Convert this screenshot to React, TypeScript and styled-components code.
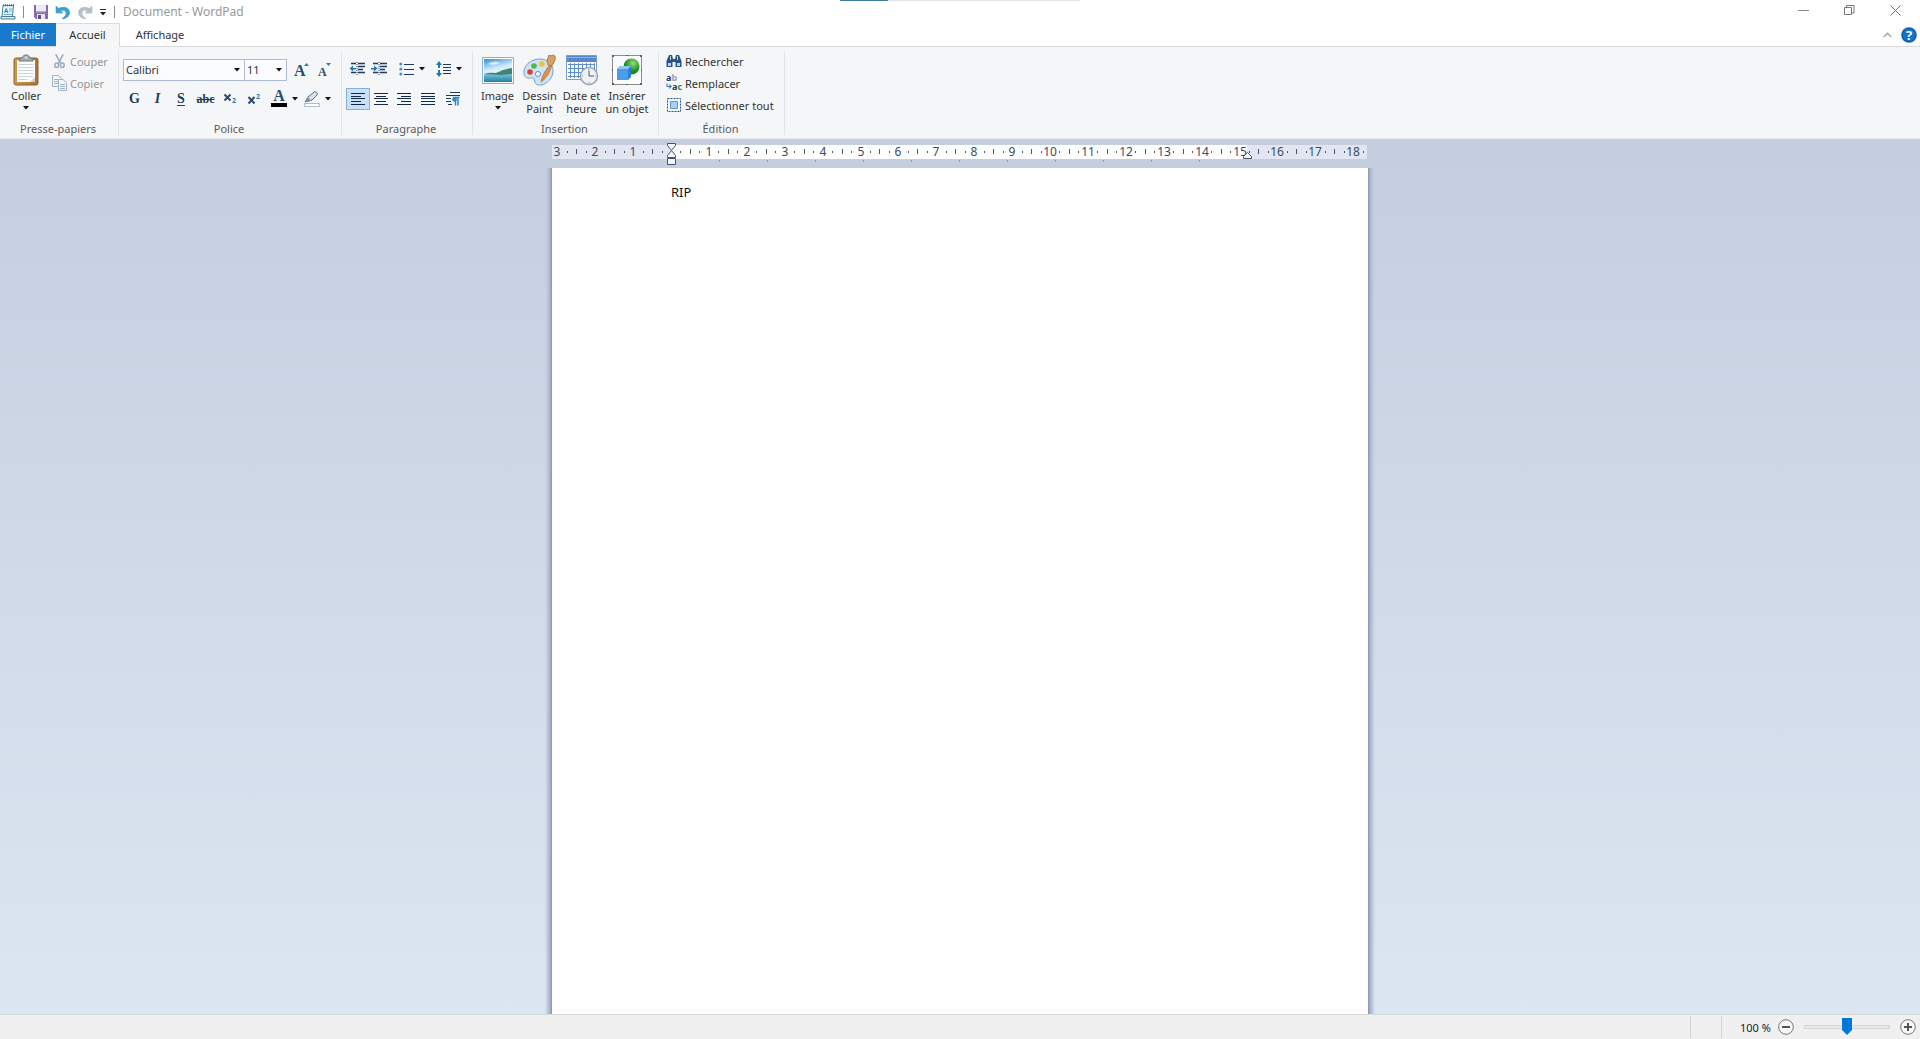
import React from "react";
import styled, { createGlobalStyle, css } from "styled-components";

const FONT = '"Noto Sans", "Open Sans", sans-serif';
const SERIF = '"Liberation Serif", "Times New Roman", serif';
const INK = "#1f3a60";

const GlobalStyle = createGlobalStyle`
  *, *::before, *::after { box-sizing: border-box; }
  body { margin: 0; font-family: ${FONT}; font-size: 11px; line-height: 13px; color: #444; overflow: hidden; }
  button, select, input, textarea { font: inherit; color: inherit; margin: 0; }
  svg { display: block; flex: none; overflow: visible; }
`;

const Window = styled.div`
  display: flex;
  flex-direction: column;
  height: 100vh;
  background: #fff;
`;

/* ---------- title bar ---------- */

const TitleBar = styled.header`
  position: relative;
  display: flex;
  align-items: center;
  height: 23px;
`;

const LoadingLine = styled.div`
  position: absolute;
  top: 0;
  left: 50%;
  width: 240px;
  height: 1px;
  margin-left: -120px;
  background: linear-gradient(to right, #3b7ba3 48px, #e2e2e2 48px);
`;

const QuickAccess = styled.div`
  display: flex;
  align-items: center;
  flex: 1;
`;

const PlainButton = styled.button<{ $width?: number; $height?: number }>`
  display: flex;
  align-items: center;
  justify-content: center;
  padding: 0;
  border: 0;
  background: none;
  width: ${(p) => (p.$width ? `${p.$width}px` : "auto")};
  height: ${(p) => p.$height ?? 22}px;
`;

const Bar = styled.span`
  width: 1px;
  height: 12px;
  background: #8a8a8a;
`;

const Title = styled.h1`
  margin: 0 0 0 4px;
  font-size: 12px;
  line-height: 16px;
  font-weight: 400;
  color: #999;
`;

const WindowControls = styled.div`
  display: flex;
  margin: 0 2px 2px 0;
`;

/* ---------- tabs ---------- */

const TabRow = styled.nav`
  display: flex;
  height: 24px;
  border-bottom: 1px solid #d9dcdf;
`;

const Tab = styled.button<{ $kind: "file" | "active" | "idle"; $width: number }>`
  width: ${(p) => p.$width}px;
  height: 23px;
  padding: 0;
  border: 0;
  background: none;
  color: #333;
  ${(p) => p.$kind === "file" && css`background: #1979ca; color: #fff;`}
  ${(p) =>
    p.$kind === "active" &&
    css`
      height: 24px;
      padding-bottom: 2px;
      background: #f5f6f7;
      border: 1px solid #dadbdc;
      border-width: 1px 1px 0 0;
    `}
`;

const TabTools = styled.div`
  display: flex;
  align-items: center;
  margin-left: auto;
  padding-right: 1px;
`;

/* ---------- ribbon ---------- */

const Ribbon = styled.div`
  display: flex;
  height: 92px;
  background: #f5f6f7;
  border-bottom: 1px solid #e8eaee;
`;

const Group = styled.section<{ $width: number }>`
  display: flex;
  flex-direction: column;
  width: ${(p) => p.$width}px;
  padding: 3px 0 2px;
  background: linear-gradient(#e2e3e4, #e2e3e4) right center / 1px 84px no-repeat;
`;

const GroupBody = styled.div<{ $pad?: string; $column?: boolean }>`
  display: flex;
  flex: 1;
  flex-direction: ${(p) => (p.$column ? "column" : "row")};
  align-items: flex-start;
  padding: ${(p) => p.$pad ?? "0"};
`;

const GroupLabel = styled.h2`
  margin: 0;
  padding-right: 3px;
  font-size: 11px;
  line-height: 14px;
  font-weight: 400;
  text-align: center;
  color: #5a5a5a;
`;

const BigButton = styled.button<{ $width: number }>`
  display: flex;
  flex-direction: column;
  align-items: center;
  width: ${(p) => p.$width}px;
  padding: 0;
  border: 0;
  background: none;
  white-space: nowrap;
  text-align: center;
  color: #333;
`;

const BigIcon = styled.span`
  display: flex;
  align-items: center;
  justify-content: center;
  height: 39px;
`;

const BigCaret = styled.span`
  display: flex;
  align-items: center;
  height: 12px;
`;

const SmallButton = styled.button`
  display: flex;
  align-items: center;
  gap: 3px;
  height: 22px;
  padding: 0;
  border: 0;
  background: none;
  white-space: nowrap;
  color: #333;

  &:disabled { color: #959595; }
`;

const Stack = styled.div`
  display: flex;
  flex-direction: column;
`;

const Row = styled.div<{ $gapBelow?: number }>`
  display: flex;
  align-items: center;
  height: 22px;
  margin-bottom: ${(p) => p.$gapBelow ?? 0}px;
`;

const SelectBox = styled.div<{ $width: number }>`
  position: relative;
  width: ${(p) => p.$width}px;
  height: 22px;
  margin-right: -1px;

  select {
    appearance: none;
    width: 100%;
    height: 22px;
    padding: 0 14px 1px 2px;
    border: 1px solid #abbbd4;
    border-radius: 0;
    background: #fbfcff;
    color: #333;
  }

  svg {
    position: absolute;
    right: 5px;
    top: 9px;
    pointer-events: none;
  }
`;

const Tool = styled.button<{ $width: number; $active?: boolean }>`
  display: flex;
  align-items: center;
  justify-content: center;
  gap: 5px;
  width: ${(p) => p.$width}px;
  height: 22px;
  padding: 0;
  border: 1px solid ${(p) => (p.$active ? "#86b1dc" : "transparent")};
  background: ${(p) => (p.$active ? "#c9e0f7" : "none")};
`;

const Glyph = styled.span<{ $italic?: boolean; $underline?: boolean; $strike?: boolean; $size?: number }>`
  font-family: ${SERIF};
  font-weight: 700;
  font-size: ${(p) => p.$size ?? 14}px;
  line-height: 14px;
  color: #243a56;
  font-style: ${(p) => (p.$italic ? "italic" : "normal")};
  text-decoration: ${(p) => (p.$underline ? "underline" : p.$strike ? "line-through" : "none")};
  text-underline-offset: 2px;
`;

/* ---------- document ---------- */

const Workspace = styled.main`
  display: flex;
  flex-direction: column;
  align-items: center;
  flex: 1;
  min-height: 0;
  overflow: hidden;
  background: linear-gradient(#c5cedf, #dce6f2);
`;

const RulerHolder = styled.div`
  width: 816px;
  height: 29px;
  padding-top: 3px;

  text { font-size: 12px; fill: #3c4a63; }
`;

const Sheet = styled.div`
  display: flex;
  flex: 1;
  min-height: 0;

  &::before, &::after {
    content: "";
    width: 7px;
    background: linear-gradient(to left, #8590ac, #a9b4cd 2px, #b9c4da 4px, transparent);
  }
  &::after { transform: scaleX(-1); }
`;

const Paper = styled.textarea`
  width: 816px;
  padding: 15px 119px;
  border: 0;
  outline: 0;
  resize: none;
  background: #fff;
  font-size: 13px;
  line-height: 18px;
  color: #111;
`;

/* ---------- status bar ---------- */

const StatusBar = styled.footer`
  display: flex;
  justify-content: flex-end;
  align-items: center;
  height: 25px;
  background: #f0f0f0;
  border-top: 1px solid #d7d7d7;
  color: #222;
`;

const StatusCell = styled.div<{ $width: number }>`
  width: ${(p) => p.$width}px;
  height: 22px;
  border-left: 1px solid #d4d4d4;
`;

const ZoomCell = styled.div`
  display: flex;
  align-items: center;
  width: 199px;
  height: 22px;
  padding-left: 18px;
  border-left: 1px solid #d4d4d4;
`;

const ZoomLabel = styled.label`
  width: 38px;
  white-space: nowrap;
`;

const ZoomSlider = styled.input`
  appearance: none;
  width: 86px;
  height: 18px;
  margin: 0 10px;
  background: none;

  &::-webkit-slider-runnable-track {
    height: 4px;
    border: 1px solid #d6d6d6;
    background: #e7eaea;
  }
  &::-webkit-slider-thumb {
    appearance: none;
    width: 10px;
    height: 17px;
    margin-top: -8px;
    background: #0078d7;
    clip-path: polygon(0 0, 100% 0, 100% 70%, 50% 100%, 0 70%);
  }
`;

/* ---------- icons ---------- */

const Caret = () => (
  <svg width="6" height="4" viewBox="0 0 6 4"><path d="M0 0h6L3 3.6z" fill="#111" /></svg>
);

const AppIcon = () => (
  <svg width="16" height="16" viewBox="0 0 16 16">
    <path d="M3 1.5h10.500l-1 11H2z" fill="#e9f6fd" stroke="#3b86a8" />
    <path d="M3 1.200h11" stroke="#2c6f8e" strokeWidth="2" strokeDasharray="1 1" />
    <path d="M4.500 9 6.300 4.500 8 9M5 7.500h2.400" stroke="#2b7fc0" fill="none" />
    <path d="M9 5h3.500M9 7h3.500M4 10.500h8" stroke="#69aede" />
    <path d="M1 12.500h14v2.500H1z" fill="#d3eefa" stroke="#4b7d94" />
  </svg>
);

const SaveIcon = () => (
  <svg width="14" height="14" viewBox="0 0 14 14">
    <path d="M0 0h14v14H2l-2-2z" fill="#8a68ae" />
    <path d="M2 0h10v7H2z" fill="#eceaf5" />
    <path d="M2 6h10v1.500H2z" fill="#b7a6cf" />
    <path d="M3 9h8v5H3z" fill="#e6e6ee" />
    <path d="M4 10h3v4H4z" fill="#655078" />
  </svg>
);

const ARROW = "M0 1v7h7L4.800 5.800C8 4.600 10 6 10 8.300c0 2-1.300 3.600-3.500 4.700v1C10.800 13.400 13.600 11 13.600 7.600 13.600 3 8.500 1 2.500 3.300z";

const UndoIcon = () => (
  <svg width="14" height="14" viewBox="0 0 14 14"><path d={ARROW} fill="#3f9dd0" stroke="#3f9dd0" strokeWidth=".6" /></svg>
);

const RedoIcon = () => (
  <svg width="14" height="14" viewBox="0 0 14 14">
    <path transform="translate(14 0) scale(-1 1)" d={ARROW} fill="#b3bfc9" stroke="#b3bfc9" strokeWidth=".6" />
  </svg>
);

const MoreIcon = () => (
  <svg width="8" height="8" viewBox="0 0 8 8"><path d="M1 1.500h6" stroke="#222" /><path d="M1 4h6L4 7.400z" fill="#222" /></svg>
);

const MinimizeIcon = () => (
  <svg width="11" height="11" viewBox="0 0 11 11"><path d="M0 5.500h11" stroke="#888" /></svg>
);

const RestoreIcon = () => (
  <svg width="11" height="11" viewBox="0 0 11 11" fill="none" stroke="#777">
    <path d="M.5 2.500h7v7h-7zM2.500 2.500v-2h7.500v7.500h-2.500" />
  </svg>
);

const CloseIcon = () => (
  <svg width="11" height="11" viewBox="0 0 11 11"><path d="m.5.5 10 10m0-10-10 10" stroke="#777" /></svg>
);

const CollapseIcon = () => (
  <svg width="9" height="6" viewBox="0 0 9 6"><path d="m.7 5 3.800-3.800L8.300 5" fill="none" stroke="#a6a6a6" strokeWidth="1.500" /></svg>
);

const HelpIcon = () => (
  <svg width="16" height="16" viewBox="0 0 16 16">
    <circle cx="8" cy="8" r="7.800" fill="#1160b4" />
    <circle cx="8" cy="8" r="6.200" fill="#1673c6" />
    <text x="8" y="12.500" textAnchor="middle" fontSize="13" fontWeight="700" fill="#fff">?</text>
  </svg>
);

const PasteIcon = () => (
  <svg width="26" height="32" viewBox="0 0 26 32">
    <defs>
      <linearGradient id="wood" x1="0" x2="1"><stop stopColor="#c99a52" /><stop offset="1" stopColor="#a8732f" /></linearGradient>
    </defs>
    <rect x="1" y="4" width="24" height="27" rx="2" fill="url(#wood)" stroke="#916329" />
    <path d="M4 6h18v22H4z" fill="#fdfdfe" />
    <path d="M5.500 10.500h15M5.500 13.500h15M5.500 16.500h15M5.500 19.500h15M5.500 22.500h15M5.500 25.500h9" stroke="#cbd5df" />
    <path d="M17 28h5v-5z" fill="#c9d1d9" />
    <path d="M6 7V5l3-1c1-4 7-4 8 0l3 1v2z" fill="#a7adb3" stroke="#6c7379" />
    <circle cx="13" cy="3.500" r="1" fill="#eef1f4" />
  </svg>
);

const CutIcon = () => (
  <svg width="15" height="16" viewBox="0 0 16 16" fill="none" stroke="#9aa9bb" strokeWidth="1.600">
    <path d="m4 1 5.500 10M12 1 6.500 11" />
    <ellipse cx="5" cy="12.500" rx="2" ry="2.300" />
    <ellipse cx="11" cy="12.500" rx="2" ry="2.300" />
  </svg>
);

const CopyIcon = () => (
  <svg width="15" height="16" viewBox="0 0 15 16" fill="#f1f4f8" stroke="#a3b3c6">
    <path d="M.5.5h6l3 3v8h-9z" />
    <path d="M2 4.500h4M2 6.500h4M2 8.500h4" />
    <path d="M6.500 4.500h4.500l3.500 3v8h-8z" />
    <path d="M8 9.500h5M8 11.500h5M8 13.500h5" />
  </svg>
);

const GrowIcon = ({ shrink }: { shrink?: boolean }) => (
  <svg width="16" height="18" viewBox="0 0 16 18">
    <text x="0" y="15" fontFamily={SERIF} fontWeight="700" fontSize={shrink ? 12 : 16} fill="#2c4c70">A</text>
    <path d={shrink ? "M8 2h5l-2.500 3z" : "M10 5h5l-2.500-3z"} fill="#2380c4" />
  </svg>
);

const ScriptIcon = ({ up }: { up?: boolean }) => (
  <svg width="15" height="18" viewBox="0 0 15 18">
    <path d={up ? "m1.500 7 6 6.500m0-6.500-6 6.500" : "m1.500 4.500 6 6m0-6-6 6"} stroke="#2c4c70" strokeWidth="2" />
    <text x="9" y={up ? 9 : 13} fontSize="7" fontWeight="700" fill="#2a78b8">2</text>
  </svg>
);

const FontColorIcon = () => (
  <svg width="16" height="16" viewBox="0 0 16 16">
    <text x="8" y="10" textAnchor="middle" fontFamily={SERIF} fontWeight="700" fontSize="16" fill="#2c4c70">A</text>
    <path d="M0 12h16v4H0z" fill="#000" />
  </svg>
);

const HighlightIcon = () => (
  <svg width="16" height="16" viewBox="0 0 16 16">
    <path d="m1 11 3-5 6-5c2-1 4 1 3 3L8 9z" fill="#d7e1ec" stroke="#596f88" />
    <path d="m1 11 3-5 3 4z" fill="#7f94ac" />
    <path d="M.5 12.500h15v3H.5z" fill="#fff" stroke="#a9bdd3" />
  </svg>
);

const IndentIcon = ({ increase }: { increase?: boolean }) => (
  <svg width="17" height="14" viewBox="0 0 17 14">
    <path d="M2 1.500h5M9 1.500h7M9 4.500h7M9 7.500h5M2 10.500h5M9 10.500h7" stroke={INK} strokeWidth="1.500" />
    <path d="M8 0v14" stroke={INK} strokeDasharray="1 1" />
    <path d={increase ? "M0 6h3V3.500L6.500 6.500 3 9.500V7.500H0z" : "M7 6H4V3.500L.5 6.500 4 9.500V7.500h3z"} fill="#2277b8" />
  </svg>
);

const BulletIcon = () => (
  <svg width="15" height="14" viewBox="0 0 15 14">
    <path d="M5 2.500h10M5 7.500h10M5 12.500h10" stroke={INK} />
    <g fill="#4c8fc3"><circle cx="1.800" cy="2" r="1.500" /><circle cx="1.800" cy="7" r="1.500" /><circle cx="1.800" cy="12" r="1.500" /></g>
  </svg>
);

const SpacingIcon = () => (
  <svg width="15" height="16" viewBox="0 0 15 16">
    <path d="M7 3.500h8M7 6.500h8M7 9.500h8M7 12.500h8" stroke={INK} />
    <path d="M3 0 0 4h2v3h2V4h2zM3 16l-3-4h2V9h2v3h2z" fill="#2277b8" />
  </svg>
);

const AlignIcon = ({ d }: { d: string }) => (
  <svg width="14" height="12" viewBox="0 0 14 12"><path d={d} stroke="#14284a" /></svg>
);

const ParagraphIcon = () => (
  <svg width="14" height="14" viewBox="0 0 14 14">
    <path d="M4 .5h10M0 3.500h14M0 6.500h5M0 9.500h5M2 12.500h4" stroke={INK} />
    <path d="M7 5.500h6.500M9.500 5v8.500M12 5v8.500" stroke="#2d87c8" strokeWidth="1.500" />
    <circle cx="8.500" cy="7.500" r="2.300" fill="#2d87c8" />
  </svg>
);

const ImageIcon = () => (
  <svg width="32" height="28" viewBox="0 0 32 28">
    <defs>
      <linearGradient id="sky" x1="0" y1="0" x2="0.300" y2="1">
        <stop stopColor="#2f8fd8" /><stop offset=".5" stopColor="#d4effa" /><stop offset="1" stopColor="#e6f6fb" />
      </linearGradient>
      <linearGradient id="sea" x1="0" y1="0" x2="0" y2="1">
        <stop stopColor="#7cc3d6" /><stop offset="1" stopColor="#1f7fae" />
      </linearGradient>
    </defs>
    <path d="M.5 1.500h31v26H.5z" fill="#fff" stroke="#86b1cf" />
    <path d="M2 3h28v23H2z" fill="url(#sky)" />
    <path d="M6 8q5-4 12-1-6 3-12 1" fill="#fff" opacity=".7" />
    <path d="M2 18h28v8H2z" fill="url(#sea)" />
    <path d="M2 18q6-2 12-1 8-4 16-5v6l-12 1z" fill="#3f8574" />
  </svg>
);

const PaintIcon = () => (
  <svg width="33" height="32" viewBox="0 0 33 32">
    <path d="M17 5C7 5 0 12 1 20c1 5 5 4 8 4 4 0 1 6 6 7 7 1 15-6 15-14 0-7-5-12-13-12z" fill="#cfe3f5" stroke="#7d9fc0" />
    <circle cx="15" cy="20" r="2.500" fill="#fff" stroke="#4f92cf" />
    <circle cx="7" cy="18" r="2.800" fill="#d8413a" />
    <circle cx="11" cy="12" r="2.800" fill="#57b34a" />
    <circle cx="19" cy="10" r="2.800" fill="#f1c232" />
    <path d="M18 28c1-7 5-12 9-18l2 1c-2 7-5 13-11 17z" fill="#d9924a" stroke="#a86a2c" strokeWidth=".6" />
    <path d="M25 11c-2-4 0-7 1-10 2 2 4-1 6 1 1 3-1 8-4 10z" fill="#d4a266" stroke="#9c6a34" strokeWidth=".8" />
  </svg>
);

const DateIcon = () => (
  <svg width="32" height="32" viewBox="0 0 32 32">
    <path d="M.5 1.500h30v24H.5z" fill="#fff" stroke="#7b9cc7" />
    <path d="M1 2h29v6H1z" fill="#5488cc" />
    <path d="M1 3.500h29" stroke="#8eb5e6" />
    <path d="M2 10.500h27M2 14.500h27M2 18.500h17M2 22.500h14M4.500 9v15M8.500 9v15M12.500 9v15M16.500 9v9M20.500 9v6M24.500 9v6M28.500 9v6" stroke="#5d8dcd" />
    <circle cx="23" cy="22" r="8.500" fill="#eef2f6" stroke="#9aa4b0" strokeWidth="1.500" />
    <path d="M23 16.500V22h5" fill="none" stroke="#4f5c6a" />
    <path d="M23 15v1M23 28v1M16 22h1M29 22h1" stroke="#8c97a4" />
  </svg>
);

const ObjectIcon = () => (
  <svg width="32" height="32" viewBox="0 0 32 32">
    <defs>
      <radialGradient id="ball" cx=".6" cy=".3"><stop stopColor="#8fe070" /><stop offset="1" stopColor="#1b8a24" /></radialGradient>
    </defs>
    <path d="M1.500 1.500h29v29h-29z" fill="#fafbfc" stroke="#8d8d8d" />
    <circle cx="20.500" cy="12.500" r="8" fill="url(#ball)" />
    <path d="m6 15 3-3h11v11l-3 3H6z" fill="#2b7fd0" />
    <path d="M6 15h11v11H6z" fill="#4a9ce8" />
    <path d="m6 15 3-3h11l-3 3z" fill="#8bc4f5" />
    <path d="M1 1h2v2H1zM15 1h2v1h-2zM29 1h2v2h-2zM1 15h1v2H1zM30 15h1v2h-1zM1 29h2v2H1zM15 30h2v1h-2zM29 29h2v2h-2z" fill="#5d5d5d" />
  </svg>
);

const FindIcon = () => (
  <svg width="16" height="14" viewBox="0 0 16 14">
    <path d="M3 1h3l1 4h2l1-4h3l2.500 6v6H9.500V8h-3v5H.5V7z" fill="#28548a" />
    <path d="M2 9h3v3H2zM11 9h3v3h-3zM4 2h1v4H4zM11 2h1v4h-1z" fill="#b5d3ee" />
  </svg>
);

const ReplaceIcon = () => (
  <svg width="16" height="16" viewBox="0 0 16 16">
    <text x="0" y="6" fontSize="9" fontWeight="700" fill={INK}>a<tspan fill="#9aa5b3">b</tspan></text>
    <path d="M1 8.500v3h4M3 9.500l2.500 2L3 13.500" fill="none" stroke="#2277b8" />
    <text x="6" y="15" fontSize="9" fontWeight="700" fill={INK}>a<tspan fill="#2f8d3a">c</tspan></text>
  </svg>
);

const SelectAllIcon = () => (
  <svg width="16" height="16" viewBox="0 0 16 16">
    <path d="M1.500 1.500h13v13h-13z" fill="none" stroke="#1f5c9c" strokeDasharray="2 1" />
    <path d="M4.500 4.500h7v7h-7z" fill="#a9d0f3" stroke="#5c97cf" />
  </svg>
);

const ZoomIcon = ({ plus }: { plus?: boolean }) => (
  <svg width="16" height="16" viewBox="0 0 16 16">
    <circle cx="8" cy="8" r="7.300" fill="#f8f8f8" stroke="#777" />
    <path d={plus ? "M4 8h8M8 4v8" : "M4 8h8"} stroke="#555" strokeWidth="2" />
  </svg>
);

/* ---------- ruler ---------- */

const CM = 37.9;
const ORIGIN = 119;
const RIGHT_MARGIN = 695;

const Ruler = () => {
  const marks: React.ReactNode[] = [];
  for (let q = -12; q <= 73; q++) {
    const px = Math.round(ORIGIN + (q * CM) / 4);
    const step = ((q % 4) + 4) % 4;
    if (step === 0 && q !== 0) {
      marks.push(<text key={q} x={px} y="14" textAnchor="middle">{Math.abs(q / 4)}</text>);
    } else if (step === 2) {
      marks.push(<rect key={q} x={px} y="7" width="1" height="5" fill="#4a5570" />);
    } else if (step !== 0) {
      marks.push(<rect key={q} x={px} y="9" width="1" height="2" fill="#4a5570" />);
    }
  }
  const stops = Array.from({ length: 11 }, (_, i) => ORIGIN + 48 * (i + 1));
  return (
    <svg width="816" height="26" viewBox="0 0 816 26" aria-label="Règle">
      <rect x="0" y="3" width="815" height="14" fill="#e2e6f0" />
      <rect x={ORIGIN} y="3" width={RIGHT_MARGIN - ORIGIN} height="14" fill="#fff" />
      {marks}
      {stops.map((x) => <rect key={x} x={x} y="18" width="1" height="2" fill="#8f9bb2" />)}
      <g fill="#f4f6fa" stroke="#44546f">
        <path d="M115.500 1.500h8v2l-4 5-4-5z" />
        <path d="M115.500 15.500v-2l4-5 4 5v2z" />
        <path d="M115.500 16.500h8v6h-8z" />
        <path d={`M${RIGHT_MARGIN - 3.5} 16.500v-2l4-4 4 4v2z`} />
      </g>
    </svg>
  );
};

/* ---------- application ---------- */

const alignments = [
  { label: "Aligner à gauche", width: 24, d: "M0 .5h14M0 3.500h10M0 5.500h14M0 8.500h10M0 11.500h14" },
  { label: "Centrer", width: 22, d: "M0 .5h14M2 3.500h10M0 5.500h14M2 8.500h10M0 11.500h14" },
  { label: "Aligner à droite", width: 24, d: "M0 .5h14M4 3.500h10M0 5.500h14M4 8.500h10M0 11.500h14" },
  { label: "Justifier", width: 23, d: "M0 .5h14M0 3.500h14M0 5.500h14M0 8.500h14M0 11.500h14" },
];

export default function App() {
  return (
    <Window>
      <GlobalStyle />
      <TitleBar>
        <LoadingLine />
        <QuickAccess>
          <PlainButton $width={16} aria-label="WordPad"><AppIcon /></PlainButton>
          <PlainButton as="span" $width={14}><Bar /></PlainButton>
          <PlainButton $width={22} aria-label="Enregistrer"><SaveIcon /></PlainButton>
          <PlainButton $width={22} aria-label="Annuler"><UndoIcon /></PlainButton>
          <PlainButton $width={22} aria-label="Rétablir"><RedoIcon /></PlainButton>
          <PlainButton $width={14} aria-label="Personnaliser"><MoreIcon /></PlainButton>
          <PlainButton as="span" $width={9}><Bar /></PlainButton>
          <Title>Document - WordPad</Title>
        </QuickAccess>
        <WindowControls>
          <PlainButton $width={46} $height={21} aria-label="Réduire"><MinimizeIcon /></PlainButton>
          <PlainButton $width={46} $height={21} aria-label="Restaurer"><RestoreIcon /></PlainButton>
          <PlainButton $width={46} $height={21} aria-label="Fermer"><CloseIcon /></PlainButton>
        </WindowControls>
      </TitleBar>

      <TabRow>
        <Tab $kind="file" $width={56}>Fichier</Tab>
        <Tab $kind="active" $width={64}>Accueil</Tab>
        <Tab $kind="idle" $width={80}>Affichage</Tab>
        <TabTools>
          <PlainButton $width={24} aria-label="Réduire le ruban"><CollapseIcon /></PlainButton>
          <PlainButton $width={20} aria-label="Aide"><HelpIcon /></PlainButton>
        </TabTools>
      </TabRow>

      <Ribbon>
        <Group $width={119}>
          <GroupBody>
            <BigButton $width={52}>
              <BigIcon><PasteIcon /></BigIcon>
              Coller
              <BigCaret><Caret /></BigCaret>
            </BigButton>
            <Stack>
              <SmallButton disabled><CutIcon />Couper</SmallButton>
              <SmallButton disabled><CopyIcon />Copier</SmallButton>
            </Stack>
          </GroupBody>
          <GroupLabel>Presse-papiers</GroupLabel>
        </Group>

        <Group $width={223}>
          <GroupBody $column $pad="9px 0 0 4px">
            <Row $gapBelow={7}>
              <SelectBox $width={122}>
                <select aria-label="Police" defaultValue="Calibri"><option>Calibri</option></select>
                <Caret />
              </SelectBox>
              <SelectBox $width={43}>
                <select aria-label="Taille" defaultValue="11"><option>11</option></select>
                <Caret />
              </SelectBox>
              <Tool $width={32} aria-label="Agrandir la police"><GrowIcon /></Tool>
              <Tool $width={16} aria-label="Réduire la police"><GrowIcon shrink /></Tool>
            </Row>
            <Row>
              <Tool $width={23} aria-label="Gras"><Glyph>G</Glyph></Tool>
              <Tool $width={23} aria-label="Italique"><Glyph $italic>I</Glyph></Tool>
              <Tool $width={24} aria-label="Souligné"><Glyph $underline>S</Glyph></Tool>
              <Tool $width={25} aria-label="Barré"><Glyph $strike $size={12}>abc</Glyph></Tool>
              <Tool $width={24} aria-label="Indice"><ScriptIcon /></Tool>
              <Tool $width={24} aria-label="Exposant"><ScriptIcon up /></Tool>
              <Tool $width={37} aria-label="Couleur du texte"><FontColorIcon /><Caret /></Tool>
              <Tool $width={29} aria-label="Surbrillance"><HighlightIcon /><Caret /></Tool>
            </Row>
          </GroupBody>
          <GroupLabel>Police</GroupLabel>
        </Group>

        <Group $width={131}>
          <GroupBody $column $pad="8px 0 0 4px">
            <Row $gapBelow={8}>
              <Tool $width={22} aria-label="Diminuer le retrait"><IndentIcon /></Tool>
              <Tool $width={23} aria-label="Augmenter le retrait"><IndentIcon increase /></Tool>
              <Tool $width={41} aria-label="Puces"><BulletIcon /><Caret /></Tool>
              <Tool $width={33} aria-label="Interligne"><SpacingIcon /><Caret /></Tool>
            </Row>
            <Row>
              {alignments.map((a, i) => (
                <Tool key={a.label} $width={a.width} $active={i === 0} aria-label={a.label}><AlignIcon d={a.d} /></Tool>
              ))}
              <Tool $width={28} aria-label="Paragraphe"><ParagraphIcon /></Tool>
            </Row>
          </GroupBody>
          <GroupLabel>Paragraphe</GroupLabel>
        </Group>

        <Group $width={186}>
          <GroupBody $pad="0 0 0 2px">
            <BigButton $width={45}>
              <BigIcon><ImageIcon /></BigIcon>
              Image
              <BigCaret><Caret /></BigCaret>
            </BigButton>
            <BigButton $width={39}><BigIcon><PaintIcon /></BigIcon>Dessin<br />Paint</BigButton>
            <BigButton $width={45}><BigIcon><DateIcon /></BigIcon>Date et<br />heure</BigButton>
            <BigButton $width={46}><BigIcon><ObjectIcon /></BigIcon>Insérer<br />un objet</BigButton>
          </GroupBody>
          <GroupLabel>Insertion</GroupLabel>
        </Group>

        <Group $width={126}>
          <GroupBody $column $pad="0 0 0 7px">
            <SmallButton><FindIcon />Rechercher</SmallButton>
            <SmallButton><ReplaceIcon />Remplacer</SmallButton>
            <SmallButton><SelectAllIcon />Sélectionner tout</SmallButton>
          </GroupBody>
          <GroupLabel>Édition</GroupLabel>
        </Group>
      </Ribbon>

      <Workspace>
        <RulerHolder><Ruler /></RulerHolder>
        <Sheet>
          <Paper aria-label="Document" defaultValue="RIP" spellCheck={false} />
        </Sheet>
      </Workspace>

      <StatusBar>
        <StatusCell $width={31} />
        <ZoomCell>
          <ZoomLabel htmlFor="zoom">100 %</ZoomLabel>
          <PlainButton $width={16} aria-label="Zoom arrière"><ZoomIcon /></PlainButton>
          <ZoomSlider id="zoom" type="range" min={0} max={200} defaultValue={100} />
          <PlainButton $width={16} aria-label="Zoom avant"><ZoomIcon plus /></PlainButton>
        </ZoomCell>
      </StatusBar>
    </Window>
  );
}
